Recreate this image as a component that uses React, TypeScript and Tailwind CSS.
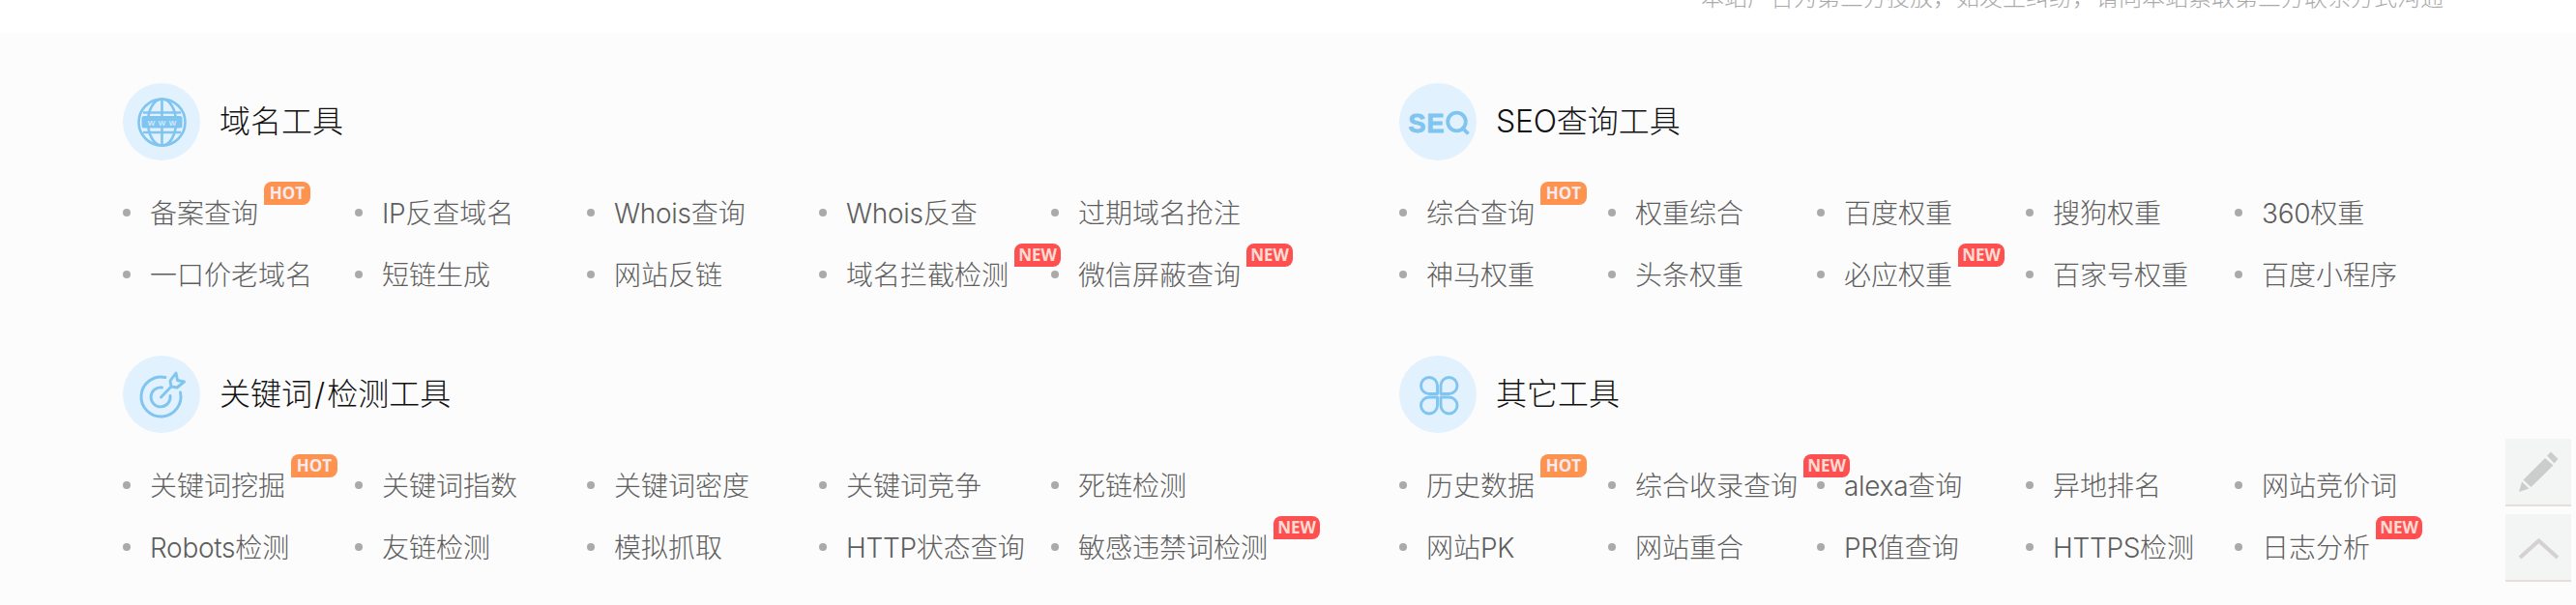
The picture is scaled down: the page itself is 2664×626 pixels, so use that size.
import React from 'react';

type Tag = 'hot' | 'new';

type Tool = {
  name: string;
  tag?: Tag;
};

type ToolGroup = {
  title: string;
  icon: React.ReactNode;
  tools: Tool[];
};

const GlobeIcon = () => (
  <svg className="h-20 w-20" viewBox="0 0 80 80" fill="none" stroke="#80c4f0" strokeWidth="2.6">
    <circle cx="40.500" cy="40.500" r="24" />
    <ellipse cx="40.500" cy="40.500" rx="14.500" ry="24" />
    <path d="M40.500 16v49M21 30.500h39M21 51h39" />
    <rect x="19.500" y="34" width="42" height="12.500" rx="2.500" fill="#80c4f0" stroke="none" />
    <g fontSize="8" fontWeight="700" fill="#cfe9fb" stroke="none" fontFamily="Liberation Sans" textAnchor="middle">
      <text x="29.500" y="43.500">W</text>
      <text x="40.500" y="43.500">W</text>
      <text x="51.500" y="43.500">W</text>
    </g>
  </svg>
);

const SeoIcon = () => (
  <svg className="h-20 w-20" viewBox="0 0 80 80" fill="none" stroke="#80c4f0">
    <g fontSize="27" fontWeight="700" fill="#80c4f0" strokeWidth="0.8" fontFamily="Liberation Sans">
      <text x="9.500" y="51">S</text>
      <text x="28.500" y="51">E</text>
    </g>
    <circle cx="59.500" cy="40" r="9.300" strokeWidth="3.800" />
    <path d="M64.500 45.500l7 7" strokeWidth="3.800" />
  </svg>
);

const TargetIcon = () => (
  <svg className="h-20 w-20" viewBox="0 0 80 80" fill="none" stroke="#80c4f0" strokeWidth="2.9" strokeLinecap="round" strokeLinejoin="round">
    <path d="M44 22.500a20.500 20.500 0 1 0 15.500 15.500" />
    <path d="M40.500 33a10 10 0 1 0 8.500 8.500" />
    <path d="M39.500 43l10.500-11M50 32l-1-6 6-8 1.500 7.500 7 1.500-7.500 6z" />
  </svg>
);

const CloverIcon = () => (
  <svg className="h-20 w-20" viewBox="0 0 80 80" fill="none" stroke="#80c4f0" strokeWidth="2.9" strokeLinejoin="round">
    <path d="M39.500 39.500h-8.500a8.500 8.500 0 1 1 8.500-8.500z" />
    <path d="M43 39.500v-8.500a8.500 8.500 0 1 1 8.500 8.500z" />
    <path d="M39.500 43v8.500a8.500 8.500 0 1 1-8.500-8.500z" />
    <path d="M43 43h8.500a8.500 8.500 0 1 1-8.500 8.500z" />
  </svg>
);

const leftGroups: ToolGroup[] = [
  {
    title: '域名工具',
    icon: <GlobeIcon />,
    tools: [
      { name: '备案查询', tag: 'hot' },
      { name: 'IP反查域名' },
      { name: 'Whois查询' },
      { name: 'Whois反查' },
      { name: '过期域名抢注' },
      { name: '一口价老域名' },
      { name: '短链生成' },
      { name: '网站反链' },
      { name: '域名拦截检测', tag: 'new' },
      { name: '微信屏蔽查询', tag: 'new' },
    ],
  },
  {
    title: '关键词/检测工具',
    icon: <TargetIcon />,
    tools: [
      { name: '关键词挖掘', tag: 'hot' },
      { name: '关键词指数' },
      { name: '关键词密度' },
      { name: '关键词竞争' },
      { name: '死链检测' },
      { name: 'Robots检测' },
      { name: '友链检测' },
      { name: '模拟抓取' },
      { name: 'HTTP状态查询' },
      { name: '敏感违禁词检测', tag: 'new' },
    ],
  },
];

const rightGroups: ToolGroup[] = [
  {
    title: 'SEO查询工具',
    icon: <SeoIcon />,
    tools: [
      { name: '综合查询', tag: 'hot' },
      { name: '权重综合' },
      { name: '百度权重' },
      { name: '搜狗权重' },
      { name: '360权重' },
      { name: '神马权重' },
      { name: '头条权重' },
      { name: '必应权重', tag: 'new' },
      { name: '百家号权重' },
      { name: '百度小程序' },
    ],
  },
  {
    title: '其它工具',
    icon: <CloverIcon />,
    tools: [
      { name: '历史数据', tag: 'hot' },
      { name: '综合收录查询', tag: 'new' },
      { name: 'alexa查询' },
      { name: '异地排名' },
      { name: '网站竞价词' },
      { name: '网站PK' },
      { name: '网站重合' },
      { name: 'PR值查询' },
      { name: 'HTTPS检测' },
      { name: '日志分析', tag: 'new' },
    ],
  },
];

const tagColors: Record<Tag, string> = {
  hot: 'bg-[#fd934f] text-[#f6e9f0]',
  new: 'bg-[#fe4f51] text-[#ffdcd2]',
};

const TagBadge = ({ tag }: { tag: Tag }) => (
  <span
    className={`absolute top-0 left-full ml-1.5 flex h-6 w-12 items-center justify-center rounded-lg rounded-bl-none font-['Open_Sans'] text-[17px] leading-6 font-bold ${tagColors[tag]}`}
  >
    {tag.toUpperCase()}
  </span>
);

// Latin runs are set a little tighter than the Chinese, slashes a little looser
const Label = ({ text }: { text: string }) => (
  <>
    {text.split(/([A-Za-z0-9]+|\/)/).map((part, i) => {
      if (part === '/') return <span key={i} className="mx-0.5">/</span>;
      if (i % 2) return <span key={i} className="tracking-[-0.3px]">{part}</span>;
      return part;
    })}
  </>
);

const Group = ({ group, columns }: { group: ToolGroup; columns: string }) => (
  <section>
    <div className="flex h-20 items-center gap-5">
      <div className="h-20 w-20 rounded-full bg-[#e1f1fe]">{group.icon}</div>
      <h2 className="text-[32px] leading-10 text-[#111]">
        <Label text={group.title} />
      </h2>
    </div>
    <ul className={`mt-[22px] grid ${columns}`}>
      {group.tools.map((tool) => (
        <li key={tool.name} className="flex h-16 items-center gap-5">
          <span className="h-2 w-2 shrink-0 rounded-full bg-[#aaa]" />
          <a className="relative h-16 text-[28px] leading-[66px] whitespace-nowrap text-[#5e5e5e]">
            <Label text={tool.name} />
            {tool.tag && <TagBadge tag={tool.tag} />}
          </a>
        </li>
      ))}
    </ul>
  </section>
);

const SideButtons = () => (
  <div className="fixed right-[5px] bottom-6 flex flex-col gap-2">
    <button className="h-[70px] w-[68px] border-b-2 border-[#e5dedb] bg-[#f3f5f4]">
      <svg className="h-[68px] w-[68px]" viewBox="0 0 68 68" fill="#cccccc">
        <path d="M43 17.500l4-4 7.500 7.500-4 4.500zM41 20l8.500 7.500-23 22.500-8-7.500zM17 44.500l7.500 7-10.500 3.500z" />
      </svg>
    </button>
    <button className="h-[70px] w-[68px] border-b-2 border-[#e5dedb] bg-[#f3f5f4]">
      <svg className="h-[68px] w-[68px]" viewBox="0 0 68 68" fill="none" stroke="#d5d1d1" strokeWidth="4">
        <path d="M15 45l19.500-17.500L54 45" />
      </svg>
    </button>
  </div>
);

export default function App() {
  return (
    <div className="h-[626px] overflow-hidden bg-white font-['Inter','Noto_Sans_CJK_SC',sans-serif] font-light">
      <div className="flex h-[34px] items-end justify-end overflow-hidden pr-[137px]">
        <p className="mb-5 text-2xl leading-8 text-[#aaa]">
          本站广告为第三方投放，如发生纠纷，请向本站索取第三方联系方式沟通
        </p>
      </div>
      <div className="flex h-[592px] bg-[#fcfcfc] pt-[52px] pl-[127px]">
        <div className="flex w-[1320px] flex-col gap-[52px]">
          {leftGroups.map((group) => (
            <Group key={group.title} group={group} columns="grid-cols-[repeat(5,240px)]" />
          ))}
        </div>
        <div className="flex flex-col gap-[52px]">
          {rightGroups.map((group) => (
            <Group key={group.title} group={group} columns="grid-cols-[repeat(5,216px)]" />
          ))}
        </div>
      </div>
      <SideButtons />
    </div>
  );
}
